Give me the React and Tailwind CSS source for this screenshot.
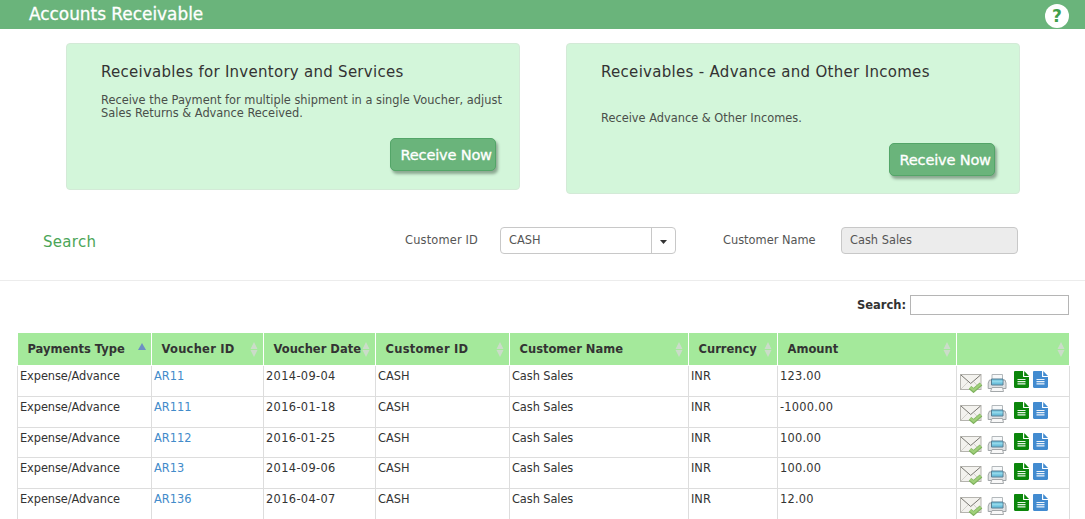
import clsx from 'clsx';

const columns = [
    { label: 'Payments Type', sorted: true },
    { label: 'Voucher ID', wide: true },
    { label: 'Voucher Date' },
    { label: 'Customer ID', wide: true },
    { label: 'Customer Name' },
    { label: 'Currency' },
    { label: 'Amount' },
    { label: '' },
];

const vouchers = [
    { id: 'AR11', date: '2014-09-04', amount: '123.00' },
    { id: 'AR111', date: '2016-01-18', amount: '-1000.00' },
    { id: 'AR112', date: '2016-01-25', amount: '100.00' },
    { id: 'AR13', date: '2014-09-06', amount: '100.00' },
    { id: 'AR136', date: '2016-04-07', amount: '12.00' },
];

const gridCols = 'grid grid-cols-[134px_112px_112px_134px_179px_89px_179px_113px]';

function SortIcon({ sorted }) {
    if (sorted) {
        return (
            <svg className="-mt-[5px] mr-[5px] h-[7px] w-2 shrink-0" viewBox="0 0 8 7">
                <path d="M4 0 8 7H0z" fill="#6d8fc4" />
            </svg>
        );
    }
    return (
        <svg className="mr-[5px] h-[15px] w-2 shrink-0" viewBox="0 0 8 15">
            <path d="M4 0 7.5 7h-7zM4 15 .5 8h7z" fill="#cbdcc9" />
        </svg>
    );
}

function MailIcon() {
    return (
        <svg className="mt-[7px] h-5 w-6" viewBox="0 0 24 20">
            <rect x="1.5" y="1.5" width="20.5" height="15" fill="#f3f2ee" stroke="#b5b4af" />
            <path d="M2 16 9 9M21.5 16 15 9" stroke="#d2d0ca" fill="none" />
            <path d="M2 2 11.7 10.5 21.5 2" stroke="#77756f" fill="none" />
            <path d="M11 14.5 14.5 17.5 22 11" stroke="#7fb25f" strokeWidth="4" fill="none" />
            <path d="M11.3 14.4 14.6 17.1 21.7 11" stroke="#a0d07a" strokeWidth="2.2" fill="none" />
        </svg>
    );
}

function PrinterIcon() {
    return (
        <svg className="mt-[7px] ml-1 h-5 w-5" viewBox="0 0 20 20">
            <path d="M5 1.5h10.5v6H5z" fill="#f7f9fa" stroke="#b3b8bb" />
            <path d="M2.5 7H18l1 3v5.5H1.2V10z" fill="#dfe1e3" stroke="#a0a5a8" />
            <path d="M4.5 6h11.5v6H4.5z" fill="#6cc0dc" stroke="#587f94" />
            <path d="M5 8.5h10.5" stroke="#93d8ea" strokeWidth="2" />
            <path d="M5 14.5h10.5l1 4h-13z" fill="#f8f8f8" stroke="#a4a8aa" />
        </svg>
    );
}

function FileIcon({ className }) {
    return (
        <svg className={clsx('mt-[5px] h-[17px] w-[15px]', className)} viewBox="0 0 15 17">
            <path d="M1.2 0H9v5.2c0 .5.4.9.9.9H15v9.7c0 .7-.5 1.2-1.2 1.2H1.2C.5 17 0 16.5 0 15.8V1.2C0 .5.5 0 1.2 0z" fill="currentColor" />
            <path d="M10.2 0 15 4.9h-4.8z" fill="currentColor" />
            <path d="M3.5 8.5h8M3.5 10.7h8M3.5 12.9h8" stroke="#fff" strokeWidth="1.2" opacity=".9" />
        </svg>
    );
}

function ReceiveButton() {
    return (
        <button className="h-[33px] w-[106px] rounded-[5px] border border-[#53a568] bg-[#6ab47b] pt-px pl-[9.5px] text-left text-[14.6px] tracking-[-0.2px] whitespace-nowrap text-white shadow-[2px_3px_3px_#8ba891] [-webkit-text-stroke:0.3px_white]">
            Receive Now
        </button>
    );
}

export default function App() {
    return (
        <div className="h-[519px] w-[1085px] overflow-hidden bg-white font-['DejaVu_Sans',sans-serif] text-[11.4px] text-[#333]">
            <header className="flex h-[29px] items-start justify-between bg-[#6ab47b] pr-4 pl-[29px]">
                <h1 className="text-[16.9px] leading-[28px] text-white [-webkit-text-stroke:0.3px_white]">Accounts Receivable</h1>
                <div className="mt-1 flex size-6 items-center justify-center rounded-full bg-white pt-px text-[17px] font-bold text-[#3f9e4b]">?</div>
            </header>

            <section className="flex h-[165px] items-start gap-[46px] pt-[14px] pl-[66px]">
                <div className="flex h-[147px] w-[454px] flex-col rounded-[4px] border border-[#d3ead7] bg-[#d3f6da] pt-[18px] pr-[23px] pl-[34px]">
                    <h2 className="text-[15px] leading-5 tracking-[0.27px] whitespace-nowrap">Receivables for Inventory and Services</h2>
                    <p className="mt-3 leading-[13px] whitespace-nowrap text-[#4a4f4a]">
                        Receive the Payment for multiple shipment in a single Voucher, adjust
                        <br />
                        Sales Returns &amp; Advance Received.
                    </p>
                    <div className="mt-[18px] flex justify-end">
                        <ReceiveButton />
                    </div>
                </div>
                <div className="flex h-[151px] w-[454px] flex-col rounded-[4px] border border-[#d3ead7] bg-[#d3f6da] pt-[18px] pr-[24px] pl-[34px]">
                    <h2 className="text-[15px] leading-5 tracking-[0.3px] whitespace-nowrap">Receivables - Advance and Other Incomes</h2>
                    <p className="mt-[30px] leading-[13px] whitespace-nowrap text-[#4a4f4a]">Receive Advance &amp; Other Incomes.</p>
                    <div className="mt-[18px] flex justify-end">
                        <ReceiveButton />
                    </div>
                </div>
            </section>

            <section className="flex h-[87px] items-start border-b border-[#ececec] pt-[33px] pl-[43px] text-[#555]">
                <h2 className="mt-[5px] w-[362px] text-[15px] leading-5 tracking-[0.3px] text-[#4ba557]">Search</h2>
                <label className="w-[95px] leading-[27px] tracking-[0.18px]">Customer ID</label>
                <div className="flex h-[27px] w-[176px] rounded-[4px] border border-[#c8c8c8]">
                    <span className="flex-1 pl-2 leading-[25px]">CASH</span>
                    <span className="flex w-6 items-center justify-center border-l border-[#c8c8c8]">
                        <svg className="mt-[2px] h-1 w-[7px]" viewBox="0 0 7 4">
                            <path d="M0 0h7L3.5 4z" fill="#333" />
                        </svg>
                    </span>
                </div>
                <label className="ml-[47px] w-[118px] leading-[27px]">Customer Name</label>
                <div className="h-[27px] w-[177px] rounded-[4px] border border-[#c8c8c8] bg-[#ececec] pl-2 leading-[25px]">Cash Sales</div>
            </section>

            <div className="flex h-[52px] items-start justify-end pt-[14px] pr-4">
                <label className="mr-1 text-[11.5px] leading-5 font-bold">Search:</label>
                <input className="h-5 w-[159px] border border-[#b5b5b5] bg-white" />
            </div>

            <div className="ml-[17px] w-[1052px]">
                <div className={clsx(gridCols, 'ml-px h-[32px] bg-[#a4e99b] text-[11.5px]')}>
                    {columns.map((col, i) => (
                        <div
                            key={i}
                            className={clsx(
                                'flex items-center justify-between border-white pl-[9.5px] font-bold',
                                i < columns.length - 1 && 'border-r',
                                col.wide && 'tracking-[0.25px]'
                            )}
                        >
                            <span className="w-0 pt-px whitespace-nowrap">{col.label}</span>
                            <SortIcon sorted={col.sorted} />
                        </div>
                    ))}
                </div>
                <div className="mt-px border-l border-[#ddd]">
                    {vouchers.map((v) => (
                        <div
                            key={v.id}
                            className={clsx(gridCols, 'h-[30.6px] leading-[20px] *:border-r *:border-b *:border-[#ddd] *:pl-[2px] first:h-[31.2px]')}
                        >
                            <div className="tracking-[-0.08px]">Expense/Advance</div>
                            <div className="text-[#428bca]">{v.id}</div>
                            <div className="tracking-[0.35px]">{v.date}</div>
                            <div>CASH</div>
                            <div className="tracking-[-0.08px]">Cash Sales</div>
                            <div>INR</div>
                            <div className="tracking-[0.25px]">{v.amount}</div>
                            <div className="flex items-start">
                                <MailIcon />
                                <PrinterIcon />
                                <FileIcon className="ml-[7px] text-[#0b860b]" />
                                <FileIcon className="ml-1 text-[#428bd0]" />
                            </div>
                        </div>
                    ))}
                </div>
            </div>
        </div>
    );
}
